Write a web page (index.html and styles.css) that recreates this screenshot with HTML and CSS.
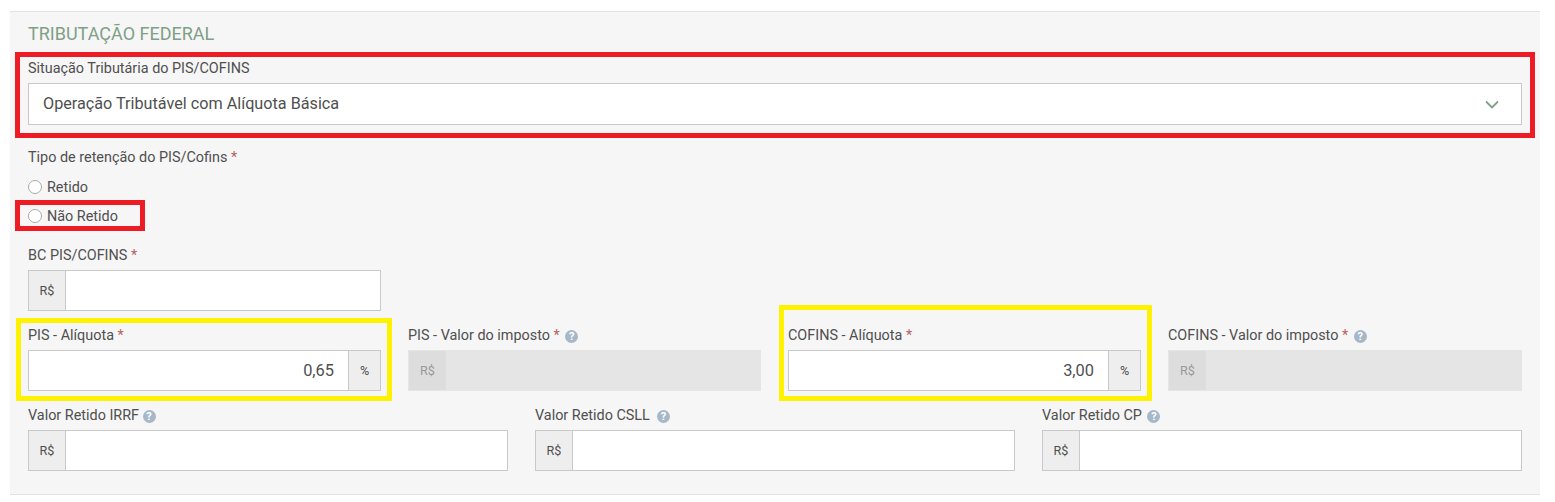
FILE: index.html
```html
<!DOCTYPE html>
<html lang="pt-BR">
<head>
  <meta charset="UTF-8" />
  <meta name="viewport" content="width=device-width, initial-scale=1.0"/>
  <title>Tributação Federal</title>
  <link rel="stylesheet" href="styles.css">
</head>
<body>

  <div class="panel">
    <h2 class="panel-title">TRIBUTAÇÃO FEDERAL</h2>

    <div class="field">
      <label class="field-label">Situação Tributária do PIS/COFINS</label>
      <div class="select-box">
        <span>Operação Tributável com Alíquota Básica</span>
        <svg class="chevron" width="14" height="9" viewBox="0 0 14 9">
          <path d="M1 1.5 L7 7.5 L13 1.5" fill="none" stroke="#7f9f86" stroke-width="1.8"/>
        </svg>
      </div>
    </div>

    <div class="radio-group">
      <label class="field-label">Tipo de retenção do PIS/Cofins <span class="req">*</span></label>
      <div class="radio-row"><span class="radio"></span> Retido</div>
      <div class="radio-row"><span class="radio"></span> Não Retido</div>
    </div>

    <!-- BC + aliquotas -->
    <div class="grid-4">
      <div class="field">
        <label class="field-label">BC PIS/COFINS <span class="req">*</span></label>
        <div class="input-group">
          <span class="addon addon-left">R$</span>
          <input type="text" class="input">
        </div>
      </div>
    </div>

    <div class="grid-4">
      <div class="field">
        <label class="field-label">PIS - Alíquota <span class="req">*</span></label>
        <div class="input-group">
          <input type="text" class="input input-right" value="0,65">
          <span class="addon addon-right">%</span>
        </div>
      </div>
      <div class="field">
        <label class="field-label">PIS - Valor do imposto <span class="req">*</span> <span class="help">?</span></label>
        <div class="input-group disabled">
          <span class="addon addon-left">R$</span>
          <input type="text" class="input" disabled>
        </div>
      </div>
      <div class="field">
        <label class="field-label">COFINS - Alíquota <span class="req">*</span></label>
        <div class="input-group">
          <input type="text" class="input input-right" value="3,00">
          <span class="addon addon-right">%</span>
        </div>
      </div>
      <div class="field">
        <label class="field-label">COFINS - Valor do imposto <span class="req">*</span> <span class="help">?</span></label>
        <div class="input-group disabled">
          <span class="addon addon-left">R$</span>
          <input type="text" class="input" disabled>
        </div>
      </div>
    </div>

    <div class="grid-3">
      <div class="field">
        <label class="field-label">Valor Retido IRRF <span class="help help-tight">?</span></label>
        <div class="input-group">
          <span class="addon addon-left">R$</span>
          <input type="text" class="input">
        </div>
      </div>
      <div class="field">
        <label class="field-label">Valor Retido CSLL &nbsp;<span class="help help-tight">?</span></label>
        <div class="input-group">
          <span class="addon addon-left">R$</span>
          <input type="text" class="input">
        </div>
      </div>
      <div class="field">
        <label class="field-label">Valor Retido CP <span class="help">?</span></label>
        <div class="input-group">
          <span class="addon addon-left">R$</span>
          <input type="text" class="input">
        </div>
      </div>
    </div>

    <!-- Annotation boxes drawn over the form -->
    <div class="mark mark-red mark-situacao"></div>
    <div class="mark mark-red mark-naoretido"></div>
    <div class="mark mark-yellow mark-pis"></div>
    <div class="mark mark-yellow mark-cofins"></div>
  </div>

</body>
</html>
```

FILE: styles.css
```css
body {
  font-family: Roboto, "Liberation Sans", sans-serif;
  margin: 0;
  padding: 11px 15px 0 10px;
  background: #fff;
  color: #4f4f4f;
}

.panel {
  position: relative;
  box-sizing: border-box;
  height: 484px;
  padding: 10px 18px 0;
  background: #f6f6f6;
  border-top: 1px solid #e2e2e2;
  border-bottom: 1px solid #e2e2e2;
}

.panel-title {
  margin: 0 0 12px;
  font-size: 18px;
  font-weight: 400;
  line-height: 24px;
  color: #7f9f86;
}

.field-label {
  display: block;
  height: 20px;
  margin-bottom: 5px;
  font-size: 14.4px;
  line-height: 22px;
  white-space: nowrap;
}

.req {
  color: #b8625d;
}

.help {
  display: inline-block;
  width: 13px;
  height: 13px;
  border-radius: 50%;
  margin-left: 2px;
  background: #a6b8c8;
  color: #fff;
  font-size: 11px;
  font-weight: 700;
  line-height: 13px;
  text-align: center;
  vertical-align: 0;
}

.help-tight {
  margin-left: 0;
}

.select-box {
  display: flex;
  align-items: center;
  justify-content: space-between;
  box-sizing: border-box;
  height: 42px;
  padding: 0 22px 2px 14px;
  background: #fff;
  border: 1px solid #c9c9c9;
  font-size: 16.2px;
}

.chevron {
  margin-top: 2px;
}

.radio-group {
  margin-top: 22px;
  margin-bottom: 19px;
}

.radio-group .field-label {
  margin-bottom: 10px;
}

.radio-row {
  display: flex;
  align-items: center;
  gap: 5px;
  height: 20px;
  margin-bottom: 9px;
  font-size: 14.4px;
}

.radio-row:last-child {
  margin-bottom: 0;
}

.radio {
  box-sizing: border-box;
  width: 14px;
  height: 14px;
  border-radius: 50%;
  background: #fff;
  border: 1px solid #aaa;
}

.grid-4,
.grid-3 {
  display: grid;
  column-gap: 27px;
  margin-bottom: 14px;
}

.grid-4 {
  grid-template-columns: 353px 353px 353px 1fr;
}

.grid-3 {
  grid-template-columns: repeat(3, 1fr);
}

.input-group {
  display: flex;
  box-sizing: border-box;
  height: 41px;
  background: #fff;
  border: 1px solid #c9c9c9;
}

.input {
  flex: 1;
  min-width: 0;
  box-sizing: border-box;
  padding: 0 14px;
  background: transparent;
  border: none;
  outline: none;
  font-family: inherit;
  font-size: 16.4px;
  color: #4f4f4f;
}

.input-right {
  text-align: right;
}

.addon {
  display: flex;
  align-items: center;
  justify-content: center;
  box-sizing: border-box;
  background: #eee;
  font-size: 12.6px;
}

.addon-left {
  width: 37px;
  border-right: 1px solid #c9c9c9;
}

.addon-right {
  width: 32px;
  border-left: 1px solid #c9c9c9;
}

.input-group.disabled {
  background: #e5e5e5;
  border-color: #e5e5e5;
}

.input-group.disabled .addon {
  background: #ddd;
  border-right: none;
  color: #999;
}

.mark {
  position: absolute;
  box-sizing: border-box;
  border: 5px solid;
}

.mark-red {
  border-color: #ed1c24;
}

.mark-yellow {
  border-color: #fff200;
}

.mark-situacao {
  left: 5px;
  top: 40px;
  width: 1520px;
  height: 86px;
}

.mark-naoretido {
  left: 5px;
  top: 188px;
  width: 130px;
  height: 31px;
}

.mark-pis {
  left: 6px;
  top: 306px;
  width: 376px;
  height: 83px;
}

.mark-cofins {
  left: 769px;
  top: 293px;
  width: 373px;
  height: 96px;
}
```
